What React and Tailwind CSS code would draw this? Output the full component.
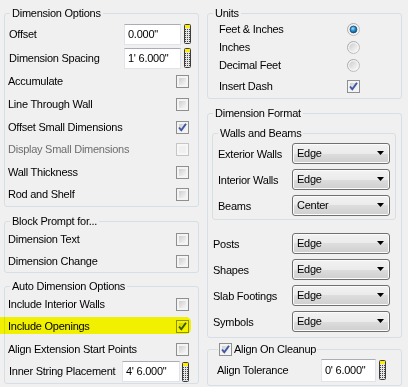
import React from "react";

const Group = ({ legend, className = "", children }) => (
  <fieldset className={`rounded-[3px] border border-[#d5dfe5] ${className}`}>
    <legend className="ml-[5px] px-[2px] leading-[13px]">{legend}</legend>
    {children}
  </fieldset>
);

const Check = ({ checked, disabled }) => (
  <div
    className={`relative w-[13px] h-[13px] shrink-0 border p-[2px] ${
      disabled ? "border-[#c6c6c6] bg-[#f7f7f7]" : "border-[#8e8f8f] bg-[#f4f4f4]"
    }`}
  >
    <div
      className={`w-full h-full ${
        disabled ? "bg-[#f0f0f0]" : "bg-gradient-to-br from-[#cfcfcf] to-[#f7f7f7]"
      }`}
    />
    {checked && (
      <svg className="absolute left-0 top-0" width="11" height="11" viewBox="0 0 11 11">
        <path d="M2 5.5 L4.3 8.3 L9 1.8" fill="none" stroke="#3d56a6" strokeWidth="1.9" />
      </svg>
    )}
  </div>
);

const Radio = ({ selected }) => (
  <svg width="13" height="13" viewBox="0 0 13 13" className="shrink-0">
    <defs>
      <linearGradient id="rg-out" x1="0" y1="0" x2="1" y2="1">
        <stop offset="0" stopColor="#a0a0a0" />
        <stop offset="1" stopColor="#c8c8c8" />
      </linearGradient>
      <linearGradient id="rg-in" x1="0" y1="0" x2="1" y2="1">
        <stop offset="0" stopColor="#cdcdcd" />
        <stop offset="1" stopColor="#fbfbfb" />
      </linearGradient>
      <radialGradient id="rg-dot" cx="0.4" cy="0.35" r="0.7">
        <stop offset="0" stopColor="#9ee0ff" />
        <stop offset="0.5" stopColor="#2b8fd0" />
        <stop offset="1" stopColor="#0b4a78" />
      </radialGradient>
    </defs>
    <circle cx="6.5" cy="6.5" r="6" fill="#f4f4f4" stroke="url(#rg-out)" />
    <circle cx="6.5" cy="6.5" r="4.3" fill="url(#rg-in)" />
    {selected && <circle cx="6.5" cy="6.5" r="3.4" fill="url(#rg-dot)" stroke="#1d4e78" strokeWidth="0.8" />}
  </svg>
);

const Calc = () => (
  <svg width="7" height="20" viewBox="0 0 7 20" className="shrink-0">
    <rect x="0.5" y="0.5" width="6" height="19" rx="1" fill="#e6e6e6" stroke="#3c3c3c" />
    <rect x="1" y="1" width="5" height="3" fill="#ffee00" />
    {[5, 7, 9, 11, 13, 15, 17].map((y) =>
      [1, 3, 5].map((x) => <rect key={`${x}-${y}`} x={x} y={y} width="1" height="1" fill="#444" />)
    )}
  </svg>
);

const Field = ({ value, w = "w-[57px]", h = "h-[21px]" }) => (
  <div
    className={`${w} ${h} flex items-center bg-white border border-[#e2e3ea] border-t-[#abadb3] pl-[3px] leading-[13px]`}
  >
    {value}
  </div>
);

const Select = ({ value }) => (
  <div className="w-[98px] h-[21px] flex items-center justify-between rounded-[3px] border border-[#707070] bg-[linear-gradient(#f2f2f2,#ebebeb_50%,#dddddd_50%,#cfcfcf)] shadow-[inset_0_0_0_1px_#fbfbfb] pl-[4px] pr-[5px]">
    <span className="leading-[13px]">{value}</span>
    <svg width="7" height="4" viewBox="0 0 7 4">
      <path d="M0 0 H7 L3.5 4 Z" fill="#000" />
    </svg>
  </div>
);

const CheckRow = ({ label, checked, disabled, h = "h-[23px]" }) => (
  <div className={`flex items-center justify-between ${h} pl-[3px] pr-[9px]`}>
    <span className={`leading-[13px] ${disabled ? "text-[#6d6d6d]" : ""}`}>{label}</span>
    <Check checked={checked} disabled={disabled} />
  </div>
);

const SelectRow = ({ label, value, pr = "pr-[5px]" }) => (
  <div className={`flex items-center justify-between h-[26px] pl-[5px] ${pr}`}>
    <span className="leading-[13px] pt-[3px]">{label}</span>
    <Select value={value} />
  </div>
);

export default function App() {
  return (
    <div className="relative w-[408px] h-[387px] overflow-hidden bg-[#f0f0f0] text-black text-[11px] tracking-[-0.25px] font-['Liberation_Sans',Arial,sans-serif] flex gap-2 pl-[4px] pt-[7px]">
      <div className="w-[195px] flex flex-col">
        <Group legend="Dimension Options">
          <div className="pt-[2px]">
            <div className="flex items-center justify-between h-[24px] pl-[4px] pr-[7px]">
              <span className="leading-[13px]">Offset</span>
              <div className="flex items-center gap-[3px]">
                <Field value={'0.000"'} />
                <Calc />
              </div>
            </div>
            <div className="flex items-center justify-between h-[24px] pl-[4px] pr-[7px]">
              <span className="leading-[13px]">Dimension Spacing</span>
              <div className="flex items-center gap-[3px]">
                <Field value={`1' 6.000"`} />
                <Calc />
              </div>
            </div>
            <CheckRow label="Accumulate" />
            <CheckRow label="Line Through Wall" />
            <CheckRow label="Offset Small Dimensions" checked h="h-[22px]" />
            <CheckRow label="Display Small Dimensions" disabled />
            <CheckRow label="Wall Thickness" h="h-[22px]" />
            <CheckRow label="Rod and Shelf" />
          </div>
        </Group>

        <Group legend="Block Prompt for..." className="mt-[8px]">
          <CheckRow label="Dimension Text" h="h-[22px]" />
          <CheckRow label="Dimension Change" h="h-[22px]" />
        </Group>

        <Group legend="Auto Dimension Options" className="mt-[7px]">
          <CheckRow label="Include Interior Walls" h="h-[22px]" />
          <CheckRow label="Include Openings" checked h="h-[23px]" />
          <CheckRow label="Align Extension Start Points" h="h-[22px]" />
          <div className="flex items-center justify-between h-[23px] pl-[4px] pr-[9px]">
            <span className="leading-[13px]">Inner String Placement</span>
            <div className="flex items-center gap-[2px]">
              <Field value={`4' 6.000"`} w="w-[58px]" />
              <Calc />
            </div>
          </div>
        </Group>
      </div>

      <div className="w-[195px] flex flex-col">
        <Group legend="Units">
          {[
            ["Feet & Inches", true],
            ["Inches", false],
            ["Decimal Feet", false],
          ].map(([label, sel]) => (
            <div key={label} className="flex items-center justify-between h-[18px] pl-[11px] pr-[41px]">
              <span className="leading-[13px]">{label}</span>
              <Radio selected={sel} />
            </div>
          ))}
          <div className="flex items-center justify-between h-[24px] pl-[11px] pr-[41px]">
            <span className="leading-[13px]">Insert Dash</span>
            <Check checked />
          </div>
        </Group>

        <Group legend="Dimension Format" className="mt-[8px] pb-[3px]">
          <Group legend="Walls and Beams" className="mt-[7px] ml-[4px] mr-[5px] pb-[1px]">
            <SelectRow label="Exterior Walls" value="Edge" />
            <SelectRow label="Interior Walls" value="Edge" />
            <SelectRow label="Beams" value="Center" />
          </Group>
          <div className="mt-[10px]">
            <SelectRow label="Posts" value="Edge" pr="pr-[11px]" />
            <SelectRow label="Shapes" value="Edge" pr="pr-[11px]" />
            <SelectRow label="Slab Footings" value="Edge" pr="pr-[11px]" />
            <SelectRow label="Symbols" value="Edge" pr="pr-[11px]" />
          </div>
        </Group>

        <fieldset className="mt-[5px] rounded-[3px] border border-[#d5dfe5] pb-[3px]">
          <legend className="ml-[10px] px-[1px] flex items-center gap-[2px] leading-[13px]">
            <Check checked />
            <span>Align On Cleanup</span>
          </legend>
          <div className="flex items-center justify-between h-[26px] pt-[2px] pl-[9px] pr-[15px]">
            <span className="leading-[13px]">Align Tolerance</span>
            <div className="flex items-center gap-[3px]">
              <Field value={`0' 6.000"`} w="w-[55px]" h="h-[23px]" />
              <Calc />
            </div>
          </div>
        </fieldset>
      </div>

      <div className="absolute left-0 top-[317px] w-[191px] h-[17px] rounded-r-[5px] bg-[#ffff00] mix-blend-multiply blur-[0.4px]" />
    </div>
  );
}
